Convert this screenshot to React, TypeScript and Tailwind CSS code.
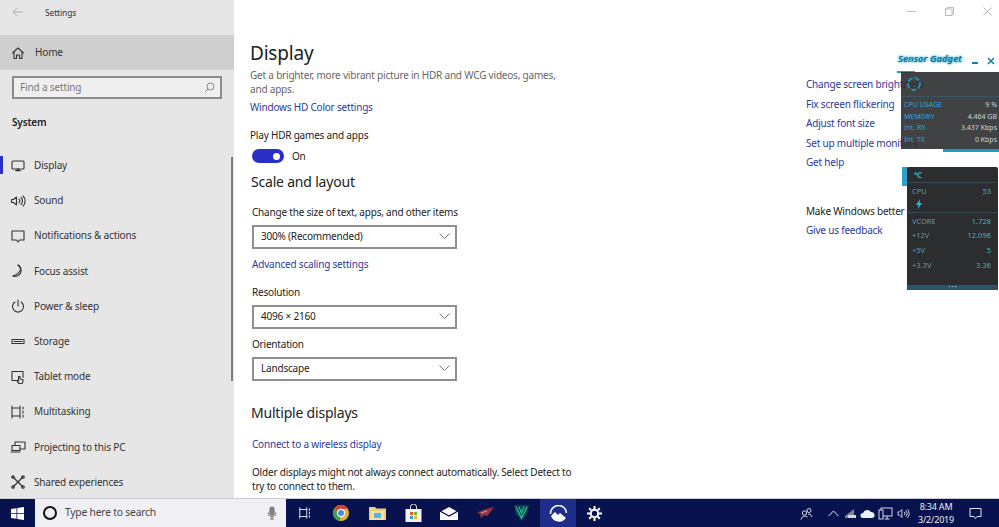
import React from "react";

const S = ({ children, w = 16, h = 16, vb = "0 0 16 16", c = "#333", sw = 1.1 }: any) => (
  <svg width={w} height={h} viewBox={vb} fill="none" stroke={c} strokeWidth={sw} strokeLinecap="round" strokeLinejoin="round">{children}</svg>
);

const nav: [string, React.ReactNode][] = [
  ["Display", <S><rect x="2" y="3" width="12" height="8" rx="1" /><path d="M6 12.500h4M8 11v1.500" strokeWidth="1.600" /></S>],
  ["Sound", <S><path d="M1.500 6.500v3h2l3 2.500v-8l-3 2.500z" /><path d="M9 6.200a2.500 2.500 0 0 1 0 3.600M11 4.500a5 5 0 0 1 0 7M13 3a7 7 0 0 1 0 10" /></S>],
  ["Notifications & actions", <S><path d="M2 3h12v9H9.500L8 14l-1.500-2H2z" /></S>],
  ["Focus assist", <S><path d="M8 2a6 6 0 0 1 0 10.500A6 6 0 0 1 3 13" /><path d="M8 2c3 2 5 7-5 11" /></S>],
  ["Power & sleep", <S><path d="M8 2v6M5 4a5.500 5.500 0 1 0 6 0" /></S>],
  ["Storage", <S><rect x="2" y="5.500" width="12" height="4" /><path d="M4 7.500h8" /></S>],
  ["Tablet mode", <S><path d="M7 11.500H2v-9h11v6" /><path d="M9 14.500c-1-1-2-2.500-2-3l1.500.5V7.500H10v2.500l3 .8V13l-1 1.500z" fill="#e6e6e6" /></S>],
  ["Multitasking", <S><path d="M2 2v12M10 2v12M2 4h8M2 12h8M13 3v2M13 7v2M13 11v2" /></S>],
  ["Projecting to this PC", <S><path d="M5 6V3h10v7h-5" /><rect x="2" y="6.500" width="8" height="5" /><path d="M1 13h9" /></S>],
  ["Shared experiences", <S sw={1.300}><path d="M3.500 3.500l9 9M12.500 3.500l-9 9" /><circle cx="3" cy="3" r="1.200" /><circle cx="13" cy="3" r="1.200" /><circle cx="3" cy="13" r="1.200" /><circle cx="13" cy="13" r="1.200" /></S>],
];

const Chevron = () => (
  <svg width="11" height="6" viewBox="0 0 11 6" fill="none" stroke="#666" strokeWidth="0.900"><path d="M.5.5l5 5 5-5" /></svg>
);

const Select = ({ label }: { label: string }) => (
  <div className="w-[205px] h-[24px] border-2 border-[#8f8f8f] flex items-center justify-between pl-[7px] pr-[5px] pb-[2px] text-[#222]">
    <span>{label}</span>
    <Chevron />
  </div>
);

const A = ({ children, className = "" }: any) => <div className={"text-[#2b3a9a] " + className}>{children}</div>;

const Row = ({ a, b }: { a: string; b: string }) => (
  <div className="flex justify-between leading-[11.700px]">
    <span className="text-[#2fa8d8]">{a}</span>
    <span className="text-[#c3d9e2]">{b}</span>
  </div>
);

const Row2 = ({ a, b }: { a: string; b: string }) => (
  <div className="flex justify-between h-[14.700px] leading-[14.700px]">
    <span className="text-[#5f9fb3]">{a}</span>
    <span className="text-[#38b4d8]">{b}</span>
  </div>
);

export default function App() {
  return (
    <div className="relative w-[999px] h-[527px] overflow-hidden bg-white flex flex-col text-[#222] tracking-[-0.2px]" style={{ fontFamily: '"Noto Sans", sans-serif' }}>
      <div className="flex h-[498px] overflow-hidden">
        {/* sidebar */}
        <aside className="relative w-[234px] shrink-0 bg-[#e6e6e6] flex flex-col text-[10px] tracking-[-0.15px]">
          <div className="h-[35px] shrink-0 flex items-start pt-[6px] text-[8.500px] leading-[13px] text-[#333] pl-[12px]">
            <svg className="mt-[1px]" width="12" height="10" viewBox="0 0 12 10" fill="none" stroke="#b0b0b0" strokeWidth="1"><path d="M11 5H1M5 1L1 5l4 4" /></svg>
            <span className="ml-[21px]">Settings</span>
          </div>
          <div className="h-[35px] shrink-0 bg-[#cfcfcf] flex items-center pl-[10px] text-[#333]">
            <S w={16} h={16}><path d="M2.500 8L8 3l5.500 5M4 7v6.500h2.500V10h3v3.500H12V7" /></S>
            <span className="ml-[9px]">Home</span>
          </div>
          <div className="mt-[6px] shrink-0 mx-[12px] h-[23px] w-[210px] border-2 border-[#8c8c8c] bg-[#efefef] flex items-center justify-between pl-[6px] pr-[5px] text-[#777]">
            <span>Find a setting</span>
            <svg width="11" height="11" viewBox="0 0 11 11" fill="none" stroke="#777" strokeWidth="0.900"><circle cx="6.500" cy="4.500" r="3.500" /><path d="M4 7l-3 3" /></svg>
          </div>
          <div className="mt-[15px] shrink-0 ml-[12px] font-semibold text-[#222] leading-[16px]">System</div>
          <div className="mt-[18px] flex flex-col">
            {nav.map(([n, ic], i) => (
              <div key={n} className="relative h-[35.200px] flex items-center pl-[10px] text-[#333] shrink-0">
                {i === 0 && <div className="absolute left-0 top-[8px] h-[18px] w-[3px] bg-[#2a2fc8]" />}
                <span className="w-[24px] flex">{ic}</span>
                <span>{n}</span>
              </div>
            ))}
          </div>
          <div className="absolute left-[231px] top-[157px] w-[2px] h-[224px] bg-[#7d7d7d]" />
        </aside>
        {/* main */}
        <main className="flex-1 relative flex">
          <div className="w-[572px] shrink-0 pl-[16px] pt-[39px] text-[10px] leading-[14px]">
            <h1 className="text-[19px] leading-[28px] text-[#222]">Display</h1>
            <p className="mt-[2px] w-[325px] text-[#666] leading-[13.500px]">Get a brighter, more vibrant picture in HDR and WCG videos, games, and apps.</p>
            <A className="mt-[4px]">Windows HD Color settings</A>
            <div className="mt-[14px]">Play HDR games and apps</div>
            <div className="mt-[5px] flex items-center h-[18px]">
              <div className="w-[32px] h-[14px] ml-[2px] rounded-full bg-[#2a2fc8] flex items-center justify-end pr-[4px]">
                <div className="w-[7px] h-[7px] rounded-full bg-white" />
              </div>
              <span className="ml-[8px]">On</span>
            </div>
            <h2 className="mt-[6px] ml-[1px] text-[14px] leading-[22px]">Scale and layout</h2>
            <div className="mt-[12px] ml-[2px]">Change the size of text, apps, and other items</div>
            <div className="mt-[6px] ml-[2px]"><Select label="300% (Recommended)" /></div>
            <A className="mt-[8px] ml-[2px]">Advanced scaling settings</A>
            <div className="mt-[14px] ml-[2px]">Resolution</div>
            <div className="mt-[6px] ml-[2px]"><Select label="4096 × 2160" /></div>
            <div className="mt-[8px] ml-[2px]">Orientation</div>
            <div className="mt-[6px] ml-[2px]"><Select label="Landscape" /></div>
            <h2 className="mt-[21px] ml-[1px] text-[14px] leading-[22px]">Multiple displays</h2>
            <A className="mt-[13px] ml-[2px]">Connect to a wireless display</A>
            <p className="mt-[14px] ml-[2px] w-[330px]">Older displays might not always connect automatically. Select Detect to try to connect to them.</p>
          </div>
          <div className="pt-[77px] text-[10px] leading-[14px] whitespace-nowrap">
            <div className="flex flex-col gap-[5.500px]">
              <A>Change screen brightness</A>
              <A>Fix screen flickering</A>
              <A>Adjust font size</A>
              <A>Set up multiple monitors</A>
              <A>Get help</A>
            </div>
            <div className="mt-[35px]">Make Windows better</div>
            <A className="mt-[5px]">Give us feedback</A>
          </div>
          {/* window controls */}
          <div className="absolute top-[7px] right-[7px] flex items-center gap-[29px]">
            <svg width="9" height="9" viewBox="0 0 9 9" stroke="#aaa" strokeWidth="0.800"><path d="M0 4.500h9" /></svg>
            <svg width="9" height="9" viewBox="0 0 9 9" fill="none" stroke="#aaa" strokeWidth="0.800"><rect x="0.500" y="2" width="6.500" height="6.500" /><path d="M2 2V.5h6.500V7H7" /></svg>
            <svg width="9" height="9" viewBox="0 0 9 9" stroke="#aaa" strokeWidth="0.800"><path d="M.5.5l8 8M8.500.5l-8 8" /></svg>
          </div>
        </main>
      </div>

      {/* taskbar */}
      <footer className="h-[29px] bg-[#08124e] flex items-center shrink-0 border-t border-[#c9cbd6]">
        <div className="w-[35px] flex justify-center">
          <svg width="13" height="13" viewBox="0 0 13 13" fill="#fff"><path d="M0 2l5.500-.8V6H0zM6.300 1.100L13 0v6H6.300zM0 6.800h5.500v4.900L0 11zM6.300 6.800H13V13l-6.700-1z" /></svg>
        </div>
        <div className="w-[251px] h-full bg-[#f0f0f4] flex items-center pl-[8px] pr-[9px] text-[10.300px] text-[#444]">
          <div className="w-[14px] h-[14px] rounded-full border-2 border-[#111] shrink-0" />
          <span className="ml-[8px]">Type here to search</span>
          <svg className="ml-auto" width="10" height="14" viewBox="0 0 10 14" fill="none" stroke="#666" strokeWidth="1"><rect x="3" y="1" width="4" height="8" rx="2" fill="#888" /><path d="M1 6.500a4 4 0 0 0 8 0M5 10.500V13M3 13h4" /></svg>
        </div>
        <div className="w-[37px] flex justify-center">
          <S w={14} h={14} c="#dfe4f5"><path d="M2 2v12M10 2v12M2 4h8M2 12h8M13 3v2M13 7v2M13 11v2" /></S>
        </div>
        <div className="flex items-center h-full">
          <div className="w-[36px] flex justify-center">
            <svg width="16" height="16" viewBox="0 0 16 16">
              <circle cx="8" cy="8" r="8" fill="#e5b52c" />
              <path d="M8 8L1 4a8 8 0 0 1 14 0H8z" fill="#d8402f" />
              <path d="M8 8l-7-4a8 8 0 0 0 6 12z" fill="#3da24b" />
              <circle cx="8" cy="8" r="3.600" fill="#4a8ae6" stroke="#fff" strokeWidth="1.200" />
            </svg>
          </div>
          <div className="w-[36px] flex justify-center">
            <svg width="17" height="14" viewBox="0 0 17 14"><path d="M0 1h6l1.500 1.500H17V14H0z" fill="#e8cf7a" /><rect x="2" y="5" width="13" height="9" fill="#f3e3a8" /><rect x="5" y="7" width="7" height="5" fill="#58b4da" /></svg>
          </div>
          <div className="w-[36px] flex justify-center">
            <svg width="17" height="18" viewBox="0 0 17 18" fill="none"><path d="M5.500 5V3a3 3 0 0 1 6 0v2" stroke="#ddd" /><rect x="0.500" y="5" width="16" height="13" fill="#f4f4f4" /><rect x="5" y="8" width="3" height="3" fill="#e4582a" /><rect x="9" y="8" width="3" height="3" fill="#6fb52c" /><rect x="5" y="12" width="3" height="3" fill="#2f9be0" /><rect x="9" y="12" width="3" height="3" fill="#f0b42c" /></svg>
          </div>
          <div className="w-[36px] flex justify-center">
            <svg width="18" height="13" viewBox="0 0 18 13"><path d="M9 0l9 5v8H0V5z" fill="#fff" /><path d="M0 4l9 5 9-5" stroke="#08124e" strokeWidth="1.300" fill="none" /></svg>
          </div>
          <div className="w-[36px] flex justify-center">
            <svg width="18" height="12" viewBox="0 0 18 12"><path d="M18 0C12 1 6 3 1 6l3 1 1 4 3-3 3 1c2-2 5-6 7-9z" fill="#9a3040" /><path d="M5 6l6-2" stroke="#ddb" strokeWidth="0.700" /></svg>
          </div>
          <div className="w-[37px] flex justify-center">
            <svg width="15" height="16" viewBox="0 0 15 16"><path d="M0 0h15l-2 9-5.500 7L2 9z" fill="#0d4a46" /><path d="M2 2l5.500 11L13 2M5 2l2.500 6L10 2" stroke="#2fc0a8" strokeWidth="1.100" fill="none" /></svg>
          </div>
          <div className="w-[36px] h-full bg-[#1f2d8a] flex justify-center items-center">
            <svg width="19" height="17" viewBox="0 0 19 17" fill="none"><path d="M1.500 9a8 8 0 0 1 16-1" stroke="#fff" strokeWidth="1.500" /><path d="M2 11l4-4 3 3 2-2 6 5a8.500 8.500 0 0 1-15-2z" fill="#fff" /></svg>
          </div>
          <div className="w-[37px] flex justify-center">
            <svg width="15" height="15" viewBox="0 0 15 15" fill="none" stroke="#fff"><circle cx="7.500" cy="7.500" r="3.700" strokeWidth="2" /><path d="M7.500 0v3M7.500 12v3M0 7.500h3M12 7.500h3M2.200 2.200l2 2M10.800 10.800l2 2M2.200 12.800l2-2M10.800 4.200l2-2" strokeWidth="2" /></svg>
          </div>
        </div>
        <div className="ml-auto flex items-center h-full text-[#e8ebf7]">
          <svg width="13" height="13" viewBox="0 0 13 13" fill="none" stroke="#e8ebf7" strokeWidth="0.900"><circle cx="4.500" cy="6" r="2.200" /><circle cx="9" cy="3.500" r="2" /><path d="M1 12.500a4 4 0 0 1 6.500-2.500M8 7a4 4 0 0 1 4 3" /></svg>
          <svg className="ml-[15px]" width="11" height="7" viewBox="0 0 11 7" fill="none" stroke="#e8ebf7"><path d="M.5 6l5-5 5 5" /></svg>
          <svg className="ml-[5px]" width="13" height="11" viewBox="0 0 13 11"><path d="M1 8l9-7v9H1z" fill="#7d8190" /><rect x="4" y="7" width="8" height="3" fill="#d6d8e0" /></svg>
          <svg className="ml-[3px]" width="15" height="9" viewBox="0 0 15 9"><path d="M3 9a2.500 2.500 0 0 1 0-5 4.500 4.500 0 0 1 8-1 3 3 0 0 1 1 6z" fill="#eef0f8" /></svg>
          <svg className="ml-[3px]" width="15" height="13" viewBox="0 0 15 13" fill="none" stroke="#e8ebf7" strokeWidth="0.900"><rect x="3" y="1" width="11" height="8" /><rect x="1" y="3" width="4" height="9" fill="#08124e" /><path d="M9 9v3M6.500 12h5" /></svg>
          <svg className="ml-[4px]" width="13" height="11" viewBox="0 0 16 14" fill="none" stroke="#e8ebf7" strokeWidth="1.100"><path d="M1 5v4h2l3 3V2L3 5z" /><path d="M9 5a3 3 0 0 1 0 4M11 3a6 6 0 0 1 0 8M13 1.500a8 8 0 0 1 0 11" /></svg>
          <div className="ml-[7px] w-[38px] text-center text-[9px] leading-[13px] whitespace-nowrap">
            <div>8:34 AM</div>
            <div>3/2/2019</div>
          </div>
          <div className="ml-[14px] mr-[17px]">
            <svg width="13" height="13" viewBox="0 0 13 13" fill="none" stroke="#e8ebf7"><path d="M1 1.500h11v8H8l-1.500 2-1.500-2H1z" /></svg>
          </div>
        </div>
      </footer>

      {/* Sensor gadget overlay */}
      <div className="absolute left-[898px] top-[53px] text-[9.500px] leading-[12px] italic font-semibold text-[#1a6f96] whitespace-nowrap tracking-normal" style={{ textShadow: "0 0 2px #35b5e0, 0 0 3px #35b5e0" }}>Sensor Gadget</div>
      <div className="absolute left-[972px] top-[62px] h-[2px] w-[6px] bg-[#1a7da6]" />
      <div className="absolute left-[987px] top-[57px]">
        <svg width="8" height="8" viewBox="0 0 8 8" stroke="#1a7da6" strokeWidth="1.500"><path d="M1 1l6 6M7 1L1 7" /></svg>
      </div>
      <div className="absolute left-[897px] top-[71px] w-[18px] h-[2px] bg-[#1f9cc8]" />
      <div className="absolute left-[901px] top-[72px] w-[98px] h-[77px] bg-[#2b2d2f]/90 text-[7px] tracking-normal">
        <div className="h-[25px] border-b border-[#3a5560] pl-[4px] pt-[3px]">
          <svg width="18" height="18" viewBox="0 0 18 18" fill="none" stroke="#2b8bb0" strokeWidth="2" strokeDasharray="5 2"><circle cx="9" cy="9" r="6" /></svg>
        </div>
        <div className="pl-[3px] pr-[2px] pt-[2px]">
          <Row a="CPU USAGE" b="9 %" />
          <Row a="MEMORY" b="4.464 GB" />
          <Row a="Int. RX" b="3.437 Kbps" />
          <Row a="Int. TX" b="0 Kbps" />
        </div>
      </div>
      <div className="absolute left-[943px] top-[149px] w-[56px] h-[3px] bg-[#1f9cc8]" />
      <div className="absolute left-[902px] top-[167px] w-[6px] h-[19px] bg-[#2e9fc9]" />
      <div className="absolute left-[907px] top-[167px] w-[91px] h-[123px] bg-[#2b2d2f] rounded-[2px] text-[7.500px] tracking-normal">
        <div className="h-[16px] mx-[1px] pl-[6px] border-b border-[#3a4a52] text-[#38b4d8] text-[8px] leading-[15px] font-bold">℃</div>
        <div className="pl-[5px] pr-[7px] pt-[1px]"><Row2 a="CPU" b="53" /></div>
        <div className="h-[14px] mx-[1px] pl-[8px] border-b border-[#3a4a52]">
          <svg width="6" height="10" viewBox="0 0 6 10" fill="#38b4d8"><path d="M4 0L0 6h2.500L2 10l4-6H3.500z" /></svg>
        </div>
        <div className="pl-[5px] pr-[7px] pt-[1px] flex flex-col">
          <Row2 a="VCORE" b="1.728" />
          <Row2 a="+12V" b="12.096" />
          <Row2 a="+5V" b="5" />
          <Row2 a="+3.3V" b="3.36" />
        </div>
        <div className="absolute bottom-0 left-0 right-0 h-[5px] bg-[#27566a] flex justify-center items-center text-[#9ccbdc] text-[5px] leading-[5px]">• • •</div>
      </div>
    </div>
  );
}
